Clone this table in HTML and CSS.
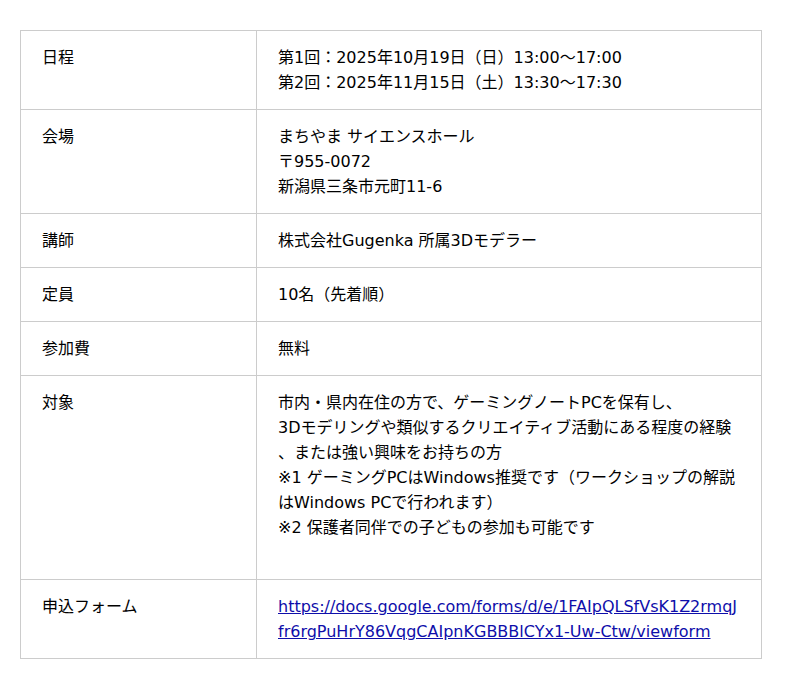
FILE: index.html
```html
<!DOCTYPE html>
<html lang="ja">
<head>
<meta charset="utf-8">
<link rel="stylesheet" href="styles.css">
</head>
<body>
<table class="info">
  <tr>
    <th>日程</th>
    <td>第1回：2025年10月19日（日）13:00～17:00<br>第2回：2025年11月15日（土）13:30～17:30</td>
  </tr>
  <tr>
    <th>会場</th>
    <td>まちやま サイエンスホール<br>〒955-0072<br>新潟県三条市元町11-6</td>
  </tr>
  <tr>
    <th>講師</th>
    <td>株式会社Gugenka 所属3Dモデラー</td>
  </tr>
  <tr>
    <th>定員</th>
    <td>10名（先着順）</td>
  </tr>
  <tr>
    <th>参加費</th>
    <td>無料</td>
  </tr>
  <tr>
    <th>対象</th>
    <td>市内・県内在住の方で、ゲーミングノートPCを保有し、<br>3Dモデリングや類似するクリエイティブ活動にある程度の経験<br>、または強い興味をお持ちの方<br>※1 ゲーミングPCはWindows推奨です（ワークショップの解説はWindows PCで行われます）<br>※2 保護者同伴での子どもの参加も可能です<br><br></td>
  </tr>
  <tr>
    <th>申込フォーム</th>
    <td><a class="link" href="#">https://docs.google.com/forms/d/e/1FAIpQLSfVsK1Z2rmqJfr6rgPuHrY86VqgCAIpnKGBBBlCYx1-Uw-Ctw/viewform</a></td>
  </tr>
</table>
</body>
</html>
```
FILE: styles.css
```css
html, body {
  margin: 0;
  padding: 0;
  background: #fff;
}
body {
  padding: 30px 20px;
  font-family: "DejaVu Sans", "Noto Sans CJK JP", sans-serif;
  font-size: 16px;
  line-height: 25px;
  color: #000;
}
.info {
  width: 742px;
  border-collapse: collapse;
  table-layout: fixed;
}
.info th,
.info td {
  border: 1px solid #ccc;
  padding: 14px 21px;
  vertical-align: top;
  text-align: left;
  font-weight: normal;
}
.info th {
  width: 193px;
}
.link {
  color: #0e0eaa;
  text-decoration: underline;
  word-break: break-all;
}
```
